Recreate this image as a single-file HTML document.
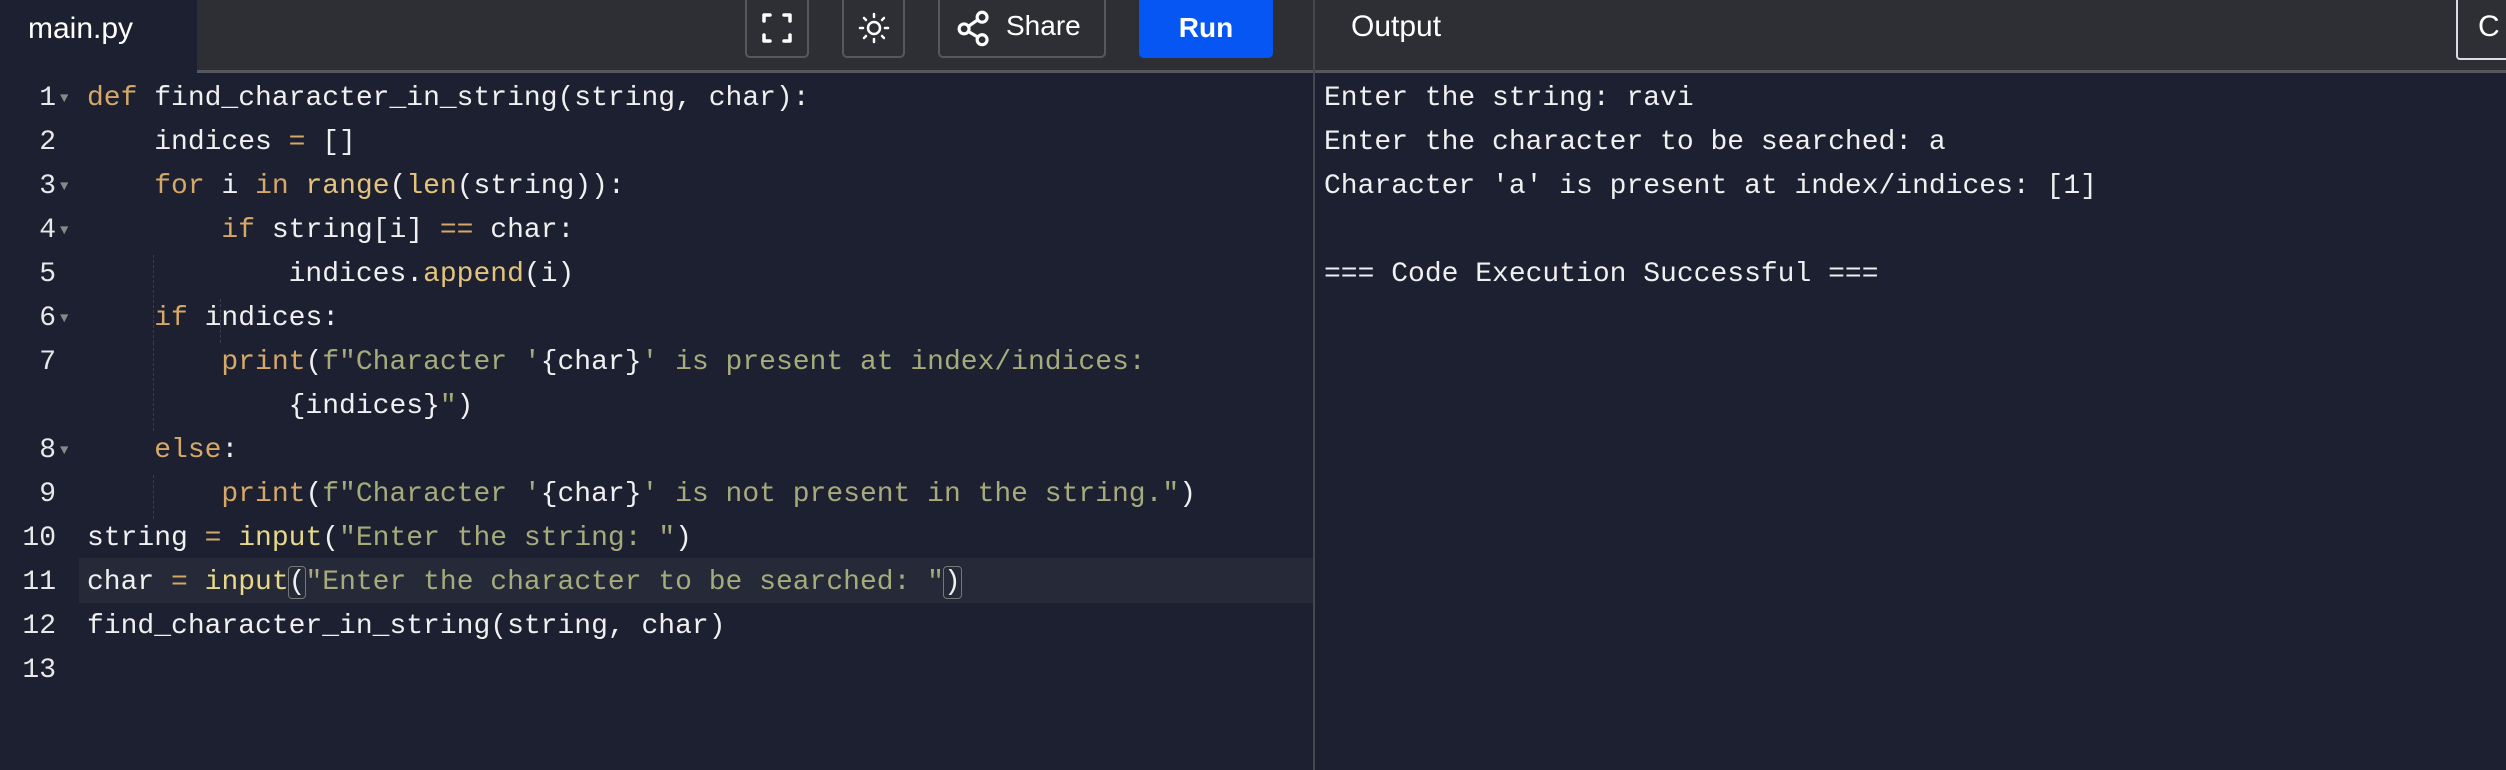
<!DOCTYPE html>
<html><head><style>
*{margin:0;padding:0;box-sizing:border-box}
body{width:2506px;height:770px;background:#1c2030;overflow:hidden;position:relative;font-family:"Liberation Sans",sans-serif}
.hdr{position:absolute;left:0;top:0;width:2506px;height:73px;background:#2e2f34;border-bottom:3px solid #55575c}
.tab{position:absolute;left:0;top:0;width:197px;height:76px;background:#1c2030;color:#fff;font-size:30px;padding:12px 0 0 28px}
.btn{position:absolute;top:-4px;height:62px;border:2px solid #56585d;border-radius:5px;color:#fff}
.run{position:absolute;left:1139px;top:0;width:134px;height:58px;background:#0556f3;border-radius:0 0 5px 5px;color:#fff;font-weight:bold;font-size:28px;text-align:center;line-height:56px}
.div{position:absolute;left:1313px;top:0;width:2px;height:770px;background:#45474d}
.code{position:absolute;left:0;top:77px;font-family:"Liberation Mono",monospace;font-size:28px;color:#f0f0f0;white-space:pre}
.ln{position:absolute;height:44px;line-height:44px}
.num{position:absolute;width:56px;text-align:right;left:0;color:#e8e8e8}
.ar{position:absolute;left:60px;color:#888;font-size:14px}
.k{color:#d6a868}.f{color:#e3c47c}.s{color:#a6ab7c}.y{color:#e8d98a}
.out{position:absolute;left:1324px;top:77px;font-family:"Liberation Mono",monospace;font-size:28px;color:#f0f0f0;white-space:pre;line-height:44px}
.g{position:absolute;left:153px;width:0;border-left:1px dashed #3a3e4c}
</style></head><body>
<div class="hdr"></div>
<div class="tab">main.py</div>
<div class="btn" style="left:745px;width:64px"><svg width="60" height="60" viewBox="0 0 60 60" fill="none" stroke="#fff" stroke-width="3.5" stroke-linecap="round" stroke-linejoin="round"><path d="M17 23v-6h6M37 17h6v6M43 37v6h-6M23 43h-6v-6"/></svg></div>
<div class="btn" style="left:842px;width:63px"><svg width="60" height="60" viewBox="0 0 60 60" fill="none" stroke="#fff" stroke-width="2.5" stroke-linecap="round"><circle cx="30" cy="30" r="6"/><path d="M30 16v3M30 41v3M16 30h3M41 30h3M20 20l2 2M38 38l2 2M40 20l-2 2M22 38l-2 2"/></svg></div>
<div class="btn" style="left:938px;width:168px"><svg style="position:absolute;left:16px;top:10px" width="36" height="40" viewBox="0 0 40 44" fill="none" stroke="#fff" stroke-width="3.5"><circle cx="29" cy="10" r="5.5"/><circle cx="9" cy="23" r="5.5"/><circle cx="29" cy="35" r="5.5"/><path d="M14 20l10-7M14 26l10 6"/></svg><span style="position:absolute;left:66px;top:12px;font-size:28px">Share</span></div>
<div class="run">Run</div>
<div style="position:absolute;left:1351px;top:10px;color:#fff;font-size:30px">Output</div>
<div style="position:absolute;left:2456px;top:-4px;width:60px;height:64px;border:2px solid #d8dce6;border-radius:4px;color:#fff;font-size:30px;padding:12px 0 0 20px">C</div>
<div class="div"></div>
<div style="position:absolute;left:79px;top:558px;width:1234px;height:45px;background:#252938"></div>
<div class="g" style="top:255px;height:88px"></div><div class="g" style="top:343px;height:88px"></div><div class="g" style="top:475px;height:44px"></div>
<div class="g" style="left:220px;top:299px;height:44px"></div>
<div class="code">
<div class="ln" style="top:0"><span class="num">1</span><span class="ar">▼</span><span style="position:absolute;left:87px"><span class="k">def</span> find_character_in_string(string, char):</span></div>
<div class="ln" style="top:44px"><span class="num">2</span><span style="position:absolute;left:87px">    indices <span class="k">=</span> []</span></div>
<div class="ln" style="top:88px"><span class="num">3</span><span class="ar">▼</span><span style="position:absolute;left:87px">    <span class="k">for</span> i <span class="k">in</span> <span class="f">range</span>(<span class="f">len</span>(string)):</span></div>
<div class="ln" style="top:132px"><span class="num">4</span><span class="ar">▼</span><span style="position:absolute;left:87px">        <span class="k">if</span> string[i] <span class="k">==</span> char:</span></div>
<div class="ln" style="top:176px"><span class="num">5</span><span style="position:absolute;left:87px">            indices.<span class="f">append</span>(i)</span></div>
<div class="ln" style="top:220px"><span class="num">6</span><span class="ar">▼</span><span style="position:absolute;left:87px">    <span class="k">if</span> indices:</span></div>
<div class="ln" style="top:264px"><span class="num">7</span><span style="position:absolute;left:87px">        <span class="k">print</span>(<span class="s">f"Character '</span>{char}<span class="s">' is present at index/indices:</span></span></div>
<div class="ln" style="top:308px"><span style="position:absolute;left:87px">            {indices}<span class="s">"</span>)</span></div>
<div class="ln" style="top:352px"><span class="num">8</span><span class="ar">▼</span><span style="position:absolute;left:87px">    <span class="k">else</span>:</span></div>
<div class="ln" style="top:396px"><span class="num">9</span><span style="position:absolute;left:87px">        <span class="k">print</span>(<span class="s">f"Character '</span>{char}<span class="s">' is not present in the string."</span>)</span></div>
<div class="ln" style="top:440px"><span class="num">10</span><span style="position:absolute;left:87px">string <span class="k">=</span> <span class="y">input</span>(<span class="s">"Enter the string: "</span>)</span></div>
<div class="ln" style="top:484px"><span class="num">11</span><span style="position:absolute;left:87px">char <span class="k">=</span> <span class="y">input</span><span style="outline:1px solid #777;border-radius:3px">(</span><span class="s">"Enter the character to be searched: "</span><span style="outline:1px solid #777;border-radius:3px">)</span></span></div>
<div class="ln" style="top:528px"><span class="num">12</span><span style="position:absolute;left:87px">find_character_in_string(string, char)</span></div>
<div class="ln" style="top:572px"><span class="num">13</span></div>
</div>
<div class="out">Enter the string: ravi
Enter the character to be searched: a
Character 'a' is present at index/indices: [1]

=== Code Execution Successful ===</div>
</body></html>
